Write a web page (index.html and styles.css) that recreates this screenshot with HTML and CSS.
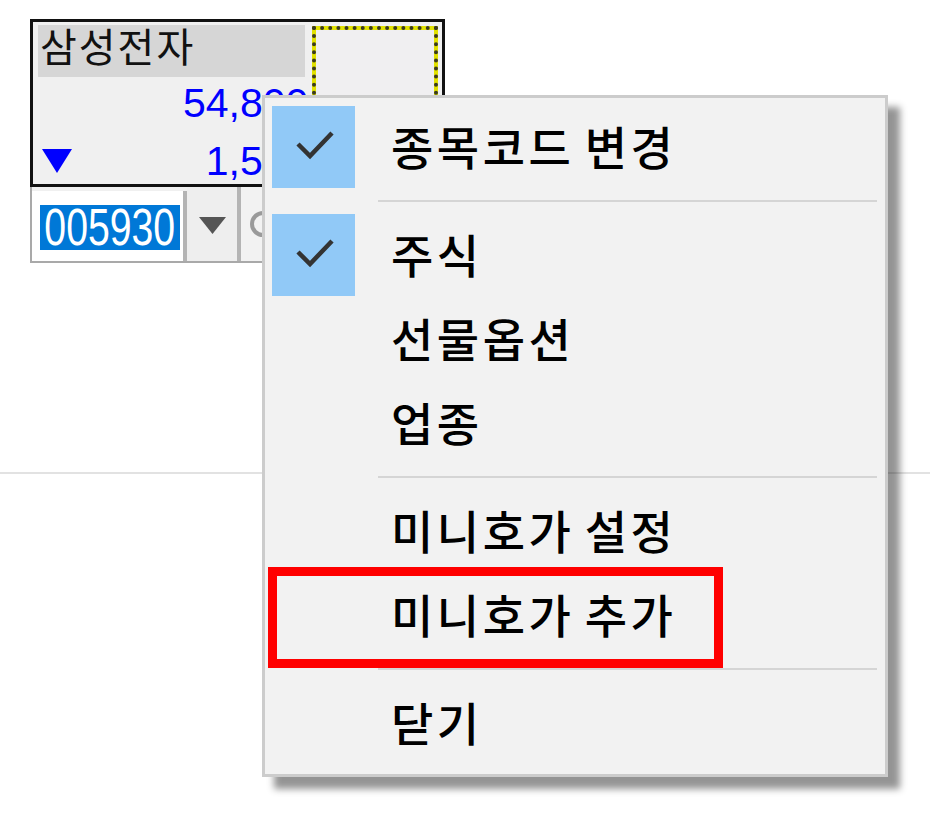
FILE: index.html
```html
<!DOCTYPE html>
<html lang="ko">
<head>
<meta charset="utf-8">
<title>미니호가</title>
<link rel="stylesheet" href="styles.css">
</head>
<body>
<div class="workspace">
  <div class="widget">
    <div class="quote">
      <div class="quote-main">
        <div class="name">삼성전자</div>
        <div class="price">54,800</div>
        <div class="change-row">
          <svg class="down" width="30" height="24" viewBox="0 0 30 24"><polygon points="0,0 30,0 15,24" fill="#0000ff"/></svg>
          <span class="change">1,500</span>
        </div>
      </div>
      <div class="quote-side"></div>
    </div>
    <div class="codebar">
      <div class="code-input"><span class="code-sel"><span class="code-text">005930</span></span></div>
      <div class="code-btn">
        <svg width="27" height="17" viewBox="0 0 27 17"><polygon points="0,0 27,0 13.5,17" fill="#555555"/></svg>
      </div>
      <div class="code-btn2">
        <svg width="40" height="40" viewBox="0 0 40 40"><circle cx="20" cy="20" r="11" fill="none" stroke="#9a9a9a" stroke-width="4"/></svg>
      </div>
    </div>
  </div>
</div>
<div class="rule"></div>

<div class="menu">
  <div class="item">
    <span class="check"><svg width="40" height="30" viewBox="0 0 40 30"><polyline points="3,14 15,26 37,3" fill="none" stroke="#333333" stroke-width="4.5" stroke-linejoin="miter"/></svg></span>
    <span class="label">종목코드 변경</span>
  </div>
  <div class="sep"></div>
  <div class="item">
    <span class="check"><svg width="40" height="30" viewBox="0 0 40 30"><polyline points="3,14 15,26 37,3" fill="none" stroke="#333333" stroke-width="4.5" stroke-linejoin="miter"/></svg></span>
    <span class="label">주식</span>
  </div>
  <div class="item">
    <span class="nocheck"></span>
    <span class="label">선물옵션</span>
  </div>
  <div class="item">
    <span class="nocheck"></span>
    <span class="label">업종</span>
  </div>
  <div class="sep"></div>
  <div class="item">
    <span class="nocheck"></span>
    <span class="label">미니호가 설정</span>
  </div>
  <div class="item marked">
    <span class="nocheck"></span>
    <span class="label">미니호가 추가</span>
    <span class="highlight"></span>
  </div>
  <div class="sep"></div>
  <div class="item">
    <span class="nocheck"></span>
    <span class="label">닫기</span>
  </div>
</div>
</body>
</html>
```

FILE: styles.css
```css
html, body {
  margin: 0;
  padding: 0;
  background: #ffffff;
}

body {
  position: relative;
  width: 930px;
  height: 825px;
  overflow: hidden;
  font-family: "Noto Sans CJK KR", "Noto Sans", sans-serif;
}

.workspace {
  padding: 19px 0 0 30px;
}

.widget {
  width: 415px;
}

.quote {
  box-sizing: border-box;
  height: 168px;
  border: 3px solid #111111;
  background: #f0f0f0;
  display: flex;
  gap: 7px;
  padding: 3px 4px 0 5px;
}

.quote-main {
  width: 268px;
  display: flex;
  flex-direction: column;
}

.name {
  height: 53px;
  background: #d6d6d6;
  font-size: 40px;
  line-height: 40px;
  color: #111111;
  padding: 0 0 0 2px;
  box-sizing: border-box;
  letter-spacing: 2px;
}

.price {
  font-family: "Liberation Sans", Arial, sans-serif;
  font-size: 41px;
  line-height: 46px;
  color: #0000ff;
  text-align: right;
  margin-top: 3px;
  margin-right: -3px;
}

.change-row {
  display: flex;
  align-items: center;
  justify-content: space-between;
  margin-top: 12px;
  padding-left: 4px;
}

.change {
  font-family: "Liberation Sans", Arial, sans-serif;
  font-size: 41px;
  line-height: 46px;
  color: #0000ff;
  margin-right: -3px;
}

.quote-side {
  position: relative;
  width: 126px;
  margin-top: 1px;
  box-sizing: border-box;
  border: 4px solid #e2e200;
  background: #f0eff1;
}

.quote-side::after {
  content: "";
  position: absolute;
  inset: -4px;
  border: 4px dotted #3a3a20;
}

.codebar {
  box-sizing: border-box;
  height: 76px;
  display: flex;
  border-left: 2px solid #a9a9a9;
  border-bottom: 2px solid #a9a9a9;
  background: #f0f0f0;
}

.code-input {
  width: 155px;
  margin-top: 4px;
  background: #ffffff;
  display: flex;
  align-items: center;
  padding-left: 8px;
  box-sizing: border-box;
  border-right: 4px solid #b4b4b4;
}

.code-sel {
  display: flex;
  align-items: center;
  justify-content: center;
  background: #0078d7;
  height: 45px;
  width: 140px;
  margin-top: 2px;
}

.code-text {
  display: inline-block;
  font-family: "Liberation Sans", Arial, sans-serif;
  font-size: 40px;
  line-height: 32px;
  color: #ffffff;
  transform: scale(0.98, 1.3);
}

.code-btn {
  width: 50px;
  display: flex;
  align-items: center;
  justify-content: center;
  background: #eeeeee;
  border-right: 4px solid #b4b4b4;
  padding-top: 2px;
}

.code-btn2 {
  flex: 1;
  display: flex;
  align-items: center;
  padding-left: 2px;
  background: #f2f2f2;
}

.rule {
  margin-top: 209px;
  height: 2px;
  background: #e2e2e2;
}

/* context menu overlay */
.menu {
  position: absolute;
  left: 262px;
  top: 95px;
  width: 626px;
  box-sizing: border-box;
  background: #f2f2f2;
  border: 3px solid #cccccc;
  padding: 7px 0 9px 0;
  box-shadow: 12px 12px 7px rgba(0, 0, 0, 0.42);
}

.item {
  position: relative;
  height: 84px;
  display: flex;
  align-items: center;
  padding-left: 7px;
}

.check,
.nocheck {
  width: 83px;
  height: 82px;
  flex: none;
  display: flex;
  align-items: center;
  justify-content: center;
}

.check {
  background: #91c9f7;
}

.check svg {
  margin-left: 2px;
  margin-top: -4px;
}

.label {
  margin-left: 36px;
  font-size: 46px;
  font-weight: 500;
  line-height: 60px;
  margin-top: -4px;
  letter-spacing: 3.5px;
  word-spacing: -6px;
  color: #000000;
  white-space: pre;
}

.sep {
  height: 2px;
  margin: 11px 8px 11px 113px;
  background: #d5d5d5;
}

.highlight {
  position: absolute;
  left: 3px;
  top: -6px;
  width: 455px;
  height: 101px;
  box-sizing: border-box;
  border: 9px solid #ff0000;
}
```
